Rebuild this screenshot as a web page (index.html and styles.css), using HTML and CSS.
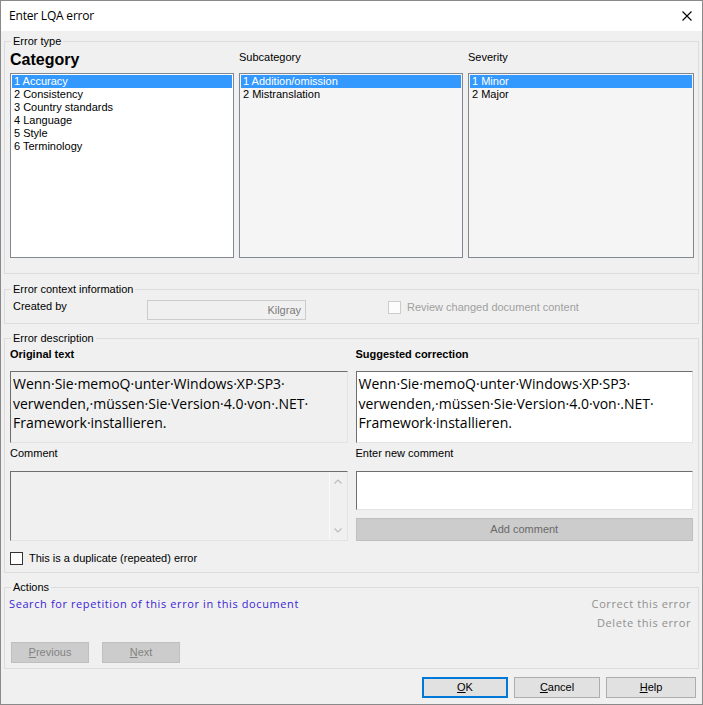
FILE: index.html
```html
<!DOCTYPE html>
<html lang="en">
<head>
  <meta charset="UTF-8">
  <title>Enter LQA error</title>
  <link rel="stylesheet" href="styles.css">
</head>
<body>

<div class="dialog">
  <div class="titlebar">
    <span class="title">Enter LQA error</span>
    <svg class="close" width="10" height="10" viewBox="0 0 10 10">
      <path d="M0.5 0.5L9.5 9.5M9.5 0.5L0.5 9.5" stroke="#000" stroke-width="1.1" fill="none"/>
    </svg>
  </div>

  <div class="content">
    <fieldset class="group grp-type">
      <legend>Error type</legend>
      <div class="type-cols">
        <div class="col">
          <div class="col-head big">Category</div>
          <ul class="listbox">
            <li class="sel">1 Accuracy</li>
            <li>2 Consistency</li>
            <li>3 Country standards</li>
            <li>4 Language</li>
            <li>5 Style</li>
            <li>6 Terminology</li>
          </ul>
        </div>
        <div class="col">
          <div class="col-head">Subcategory</div>
          <ul class="listbox dim">
            <li class="sel">1 Addition/omission</li>
            <li>2 Mistranslation</li>
          </ul>
        </div>
        <div class="col">
          <div class="col-head">Severity</div>
          <ul class="listbox dim">
            <li class="sel">1 Minor</li>
            <li>2 Major</li>
          </ul>
        </div>
      </div>
    </fieldset>

    <fieldset class="group grp-ctx">
      <legend>Error context information</legend>
      <div class="ctx-row">
        <span class="ctx-label">Created by</span>
        <div class="readonly-box">Kilgray</div>
        <label class="review">
          <span class="cb cb-off"></span>
          Review changed document content
        </label>
      </div>
    </fieldset>

    <fieldset class="group grp-desc">
      <legend>Error description</legend>
      <div class="desc-cols">
        <div class="col">
          <div class="desc-head">Original text</div>
          <div class="text-box orig">Wenn·Sie·memoQ·unter·Windows·XP·SP3· verwenden,·müssen·Sie·Version·4.0·von·.NET· Framework·installieren.</div>
          <div class="sub-head">Comment</div>
          <div class="comment-box">
            <div class="scroll">
              <svg width="8" height="5" viewBox="0 0 8 5"><path d="M0.5 4.5L4 1L7.5 4.5" stroke="#bdbdbd" stroke-width="1.2" fill="none"/></svg>
              <svg width="8" height="5" viewBox="0 0 8 5"><path d="M0.5 0.5L4 4L7.5 0.5" stroke="#bdbdbd" stroke-width="1.2" fill="none"/></svg>
            </div>
          </div>
        </div>
        <div class="col">
          <div class="desc-head">Suggested correction</div>
          <div class="text-box sugg">Wenn·Sie·memoQ·unter·Windows·XP·SP3· verwenden,·müssen·Sie·Version·4.0·von·.NET· Framework·installieren.</div>
          <div class="sub-head">Enter new comment</div>
          <div class="new-comment"></div>
          <div class="btn btn-off add-btn">Add comment</div>
        </div>
      </div>
      <label class="dup">
        <span class="cb"></span>
        This is a duplicate (repeated) error
      </label>
    </fieldset>

    <fieldset class="group grp-actions">
      <legend>Actions</legend>
      <div class="actions-top">
        <a class="link" href="#">Search for repetition of this error in this document</a>
        <div class="side-links">
          <span class="link-off">Correct this error</span>
          <span class="link-off">Delete this error</span>
        </div>
      </div>
      <div class="nav-btns">
        <div class="btn btn-off nav"><u>P</u>revious</div>
        <div class="btn btn-off nav"><u>N</u>ext</div>
      </div>
    </fieldset>
  </div>

  <div class="footer">
    <div class="btn btn-ok"><u>O</u>K</div>
    <div class="btn"><u>C</u>ancel</div>
    <div class="btn btn-help"><u>H</u>elp</div>
  </div>
</div>

</body>
</html>
```

FILE: styles.css
```css
body {
  margin: 0;
  font-family: "Liberation Sans", Arial, sans-serif;
  font-size: 11px;
  color: #000;
}
.dialog {
  width: 703px;
  height: 705px;
  box-sizing: border-box;
  border: 1px solid #8a8a8a;
  background: #f0f0f0;
  display: flex;
  flex-direction: column;
}
.titlebar {
  height: 30px;
  flex: none;
  background: #fff;
  display: flex;
  align-items: center;
  justify-content: space-between;
  padding: 0 10px 0 8px;
}
.title {
  font-family: "Open Sans", sans-serif;
  font-size: 12px;
  letter-spacing: -0.2px;
  margin-top: -1px;
}
.content {
  padding: 4px 3px 0;
  display: flex;
  flex-direction: column;
}
.group {
  margin: 0;
  min-width: 0;
  border: 1px solid #dcdcdc;
  padding: 0 5px;
}
.group legend {
  margin-left: 1px;
  padding: 0 2px;
  line-height: 13px;
}
.grp-type {
  padding-right: 4px;
  padding-bottom: 15px;
}
.grp-ctx {
  margin-top: 9px;
  padding-top: 4px;
  padding-bottom: 3px;
}
.grp-desc {
  margin-top: 8px;
  padding-bottom: 7px;
}
.grp-actions {
  margin-top: 8px;
  padding-bottom: 5px;
}

/* error type */
.type-cols {
  display: grid;
  grid-template-columns: 224px 224px 1fr;
  column-gap: 5px;
}
.col-head {
  height: 25px;
  box-sizing: border-box;
  padding-top: 3px;
  line-height: 13px;
}
.col-head.big {
  font-size: 16px;
  font-weight: bold;
  line-height: 18px;
}
.listbox {
  height: 185px;
  box-sizing: border-box;
  margin: 0;
  padding: 1px;
  list-style: none;
  border: 1px solid #828790;
  background: #fff;
}
.listbox.dim {
  background: #f5f5f5;
}
.listbox li {
  line-height: 13px;
  padding-left: 2px;
}
.listbox li.sel {
  background: #3399ff;
  color: #fff;
}

/* context */
.ctx-row {
  display: flex;
  align-items: flex-start;
  height: 20px;
}
.ctx-label {
  width: 134px;
  padding-left: 3px;
  line-height: 13px;
}
.readonly-box {
  width: 159px;
  height: 20px;
  box-sizing: border-box;
  border: 1px solid #cccccc;
  background: #f0f0f0;
  color: #7a7a7a;
  text-align: right;
  padding-right: 4px;
  line-height: 19px;
}
.review {
  margin-left: 82px;
  margin-top: 1px;
  display: flex;
  align-items: center;
  gap: 6px;
  color: #a0a0a0;
  line-height: 13px;
}
.cb {
  width: 13px;
  height: 13px;
  box-sizing: border-box;
  border: 1px solid #333;
  background: #fff;
  flex: none;
}
.cb-off {
  border-color: #cccccc;
  background: #fcfcfc;
}

/* description */
.desc-cols {
  display: grid;
  grid-template-columns: 1fr 1fr;
  column-gap: 8px;
}
.desc-head {
  height: 26px;
  box-sizing: border-box;
  padding-top: 3px;
  line-height: 13px;
  font-weight: bold;
}
.sub-head {
  height: 28px;
  box-sizing: border-box;
  padding-top: 4px;
  line-height: 13px;
}
.text-box,
.comment-box,
.new-comment {
  box-sizing: border-box;
  border: 1px solid;
  border-color: #6e6e6e #e3e3e3 #e3e3e3 #6e6e6e;
}
.text-box {
  height: 72px;
  padding: 2px 2px 0;
  font-family: "Open Sans", sans-serif;
  font-size: 14px;
  line-height: 19.5px;
}
.orig {
  background: #f0f0f0;
}
.sugg {
  background: #fff;
}
.comment-box {
  height: 70px;
  background: #f0f0f0;
  display: flex;
  justify-content: flex-end;
}
.scroll {
  width: 18px;
  box-sizing: border-box;
  border-left: 1px solid #fafafa;
  padding: 7px 0;
  display: flex;
  flex-direction: column;
  justify-content: space-between;
  align-items: center;
}
.scroll svg {
  display: block;
}
.new-comment {
  height: 39px;
  background: #fff;
}
.dup {
  margin-top: 11px;
  display: flex;
  align-items: center;
  gap: 6px;
  line-height: 13px;
}

/* actions */
.actions-top {
  height: 48px;
  box-sizing: border-box;
  padding-top: 2px;
  display: flex;
  justify-content: space-between;
  font-family: "Open Sans", sans-serif;
  font-size: 11px;
  line-height: 15px;
  letter-spacing: 0.6px;
}
.link {
  margin-left: -1px;
  color: #3a1fd6;
  text-decoration: none;
}
.side-links {
  display: flex;
  flex-direction: column;
  align-items: flex-end;
  gap: 4px;
  padding-right: 2px;
  color: #8f8f8f;
}
.nav-btns {
  display: flex;
  gap: 13px;
  padding-left: 1px;
}

/* buttons */
.btn {
  width: 86px;
  height: 21px;
  box-sizing: border-box;
  border: 1px solid #adadad;
  background: #e1e1e1;
  text-align: center;
  line-height: 19px;
}
.btn-off {
  background: #cccccc;
  border-color: #bfbfbf;
  color: #838383;
}
.add-btn {
  width: auto;
  height: 23px;
  margin-top: 8px;
  line-height: 21px;
  color: #6a6a6a;
}
.nav {
  width: 78px;
}
.footer {
  display: flex;
  justify-content: flex-end;
  gap: 6px;
  padding: 8px 6px 0 0;
}
.btn-ok {
  border: 2px solid #0078d7;
  line-height: 17px;
}
.btn-help {
  width: 90px;
}
```
